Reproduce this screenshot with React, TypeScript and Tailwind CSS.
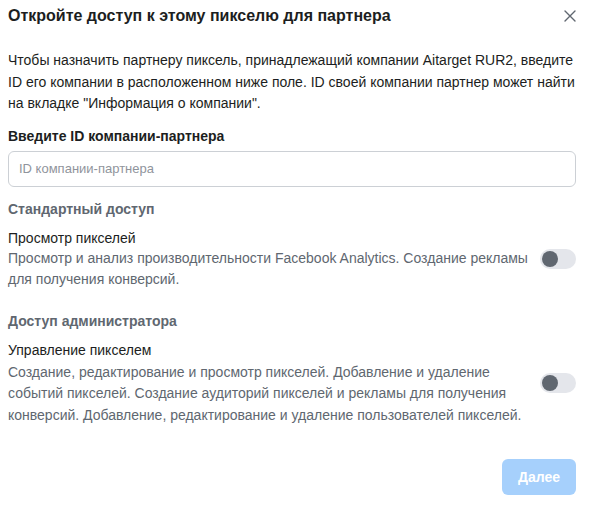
import React from 'react'

interface Permission {
  title: string
  description: string
}

const SECTIONS: { heading: string; item: Permission }[] = [
  {
    heading: 'Стандартный доступ',
    item: {
      title: 'Просмотр пикселей',
      description:
        'Просмотр и анализ производительности Facebook Analytics. Создание рекламы для получения конверсий.',
    },
  },
  {
    heading: 'Доступ администратора',
    item: {
      title: 'Управление пикселем',
      description:
        'Создание, редактирование и просмотр пикселей. Добавление и удаление событий пикселей. Создание аудиторий пикселей и рекламы для получения конверсий. Добавление, редактирование и удаление пользователей пикселей.',
    },
  },
]

function Toggle() {
  return (
    <div className="flex h-[20px] w-[36px] shrink-0 items-center rounded-full bg-[#e4e6eb] px-[2px]">
      <span className="size-[16px] rounded-full bg-[#606770]" />
    </div>
  )
}

export default function App() {
  return (
    <div className="h-[505px] w-[595px] bg-white pl-2 pr-[19px] font-['Liberation_Sans',Arial,sans-serif] text-[#1c1e21]">
      {/* Header */}
      <div className="flex h-[32px] items-center justify-between">
        <h2 className="text-[16px] font-bold leading-[20px]">Откройте доступ к этому пикселю для партнера</h2>
        <button aria-label="Закрыть" className="flex size-[12px] items-center justify-center">
          <svg viewBox="0 0 12 12" className="size-[12px]" fill="none" stroke="#606770" strokeWidth="1.4" strokeLinecap="round">
            <path d="M1 1L11 11M11 1L1 11" />
          </svg>
        </button>
      </div>

      <p className="mt-[18px] text-[14px] leading-[21.5px]">
        Чтобы назначить партнеру пиксель, принадлежащий компании Aitarget RUR2, введите ID его компании в
        расположенном ниже поле. ID своей компании партнер может найти на вкладке "Информация о компании".
      </p>

      <label className="mt-[11px] block text-[14px] font-bold leading-[20px]">Введите ID компании-партнера</label>
      <input
        placeholder="ID компании-партнера"
        className="mt-[5px] block h-[36px] w-full rounded-[6px] border border-[#ccd0d5] px-[10px] text-[13px] outline-none placeholder:text-[#90949c]"
      />

      {SECTIONS.map((section, i) => (
        <div key={section.heading} className={i === 0 ? 'mt-[12px]' : 'mt-[20px]'}>
          <h3 className="text-[14px] font-bold leading-[20px] text-[#606770]">{section.heading}</h3>
          <div className="mt-[9px] flex items-center gap-[6px]">
            <div className="flex-1">
              <div className="text-[14px] leading-[20px]">{section.item.title}</div>
              <p className={`${i === 0 ? 'mt-0' : 'mt-[2px]'} text-[14px] leading-[21.5px] text-[#606770]`}>
                {section.item.description}
              </p>
            </div>
            <Toggle />
          </div>
        </div>
      ))}

      <div className="mt-[33px] flex justify-end">
        <button className="h-[36px] w-[74px] rounded-[6px] bg-[#a6d0fc] text-[14px] font-bold text-white">Далее</button>
      </div>
    </div>
  )
}
